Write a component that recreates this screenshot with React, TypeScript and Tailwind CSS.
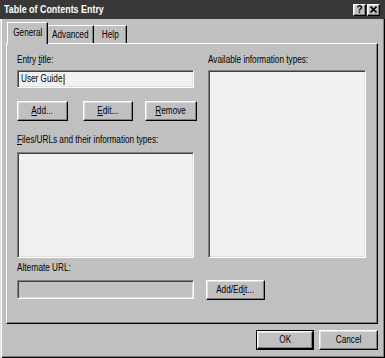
import React from "react";

const raised =
  "border border-t-white border-l-white border-r-black border-b-black shadow-[inset_-1px_-1px_0_#808080,inset_1px_1px_0_#dfdfdf]";
const sunken =
  "border border-t-[#808080] border-l-[#808080] border-r-white border-b-white shadow-[inset_1px_1px_0_#404040,inset_-1px_-1px_0_#dfdfdf]";

function T({ children, center = false }: { children: React.ReactNode; center?: boolean }) {
  return (
    <span
      className={`inline-block whitespace-nowrap scale-x-[0.82] ${center ? "origin-center" : "origin-left"}`}
    >
      {children}
    </span>
  );
}

function Btn({ children, className = "" }: { children: React.ReactNode; className?: string }) {
  return (
    <div className={`${raised} bg-[#c0c0c0] flex items-center justify-center text-black ${className}`}>
      <T center>{children}</T>
    </div>
  );
}

function U({ children }: { children: React.ReactNode }) {
  return <span className="underline underline-offset-[1px]">{children}</span>;
}

export default function App() {
  return (
    <div className="w-[385px] h-[358px] bg-[#c0c0c0] flex flex-col font-['Liberation_Sans',Arial,sans-serif] text-[10px] leading-[12px] text-black shadow-[inset_1px_1px_0_#dfdfdf,inset_2px_2px_0_#fff,inset_-1px_-1px_0_#000,inset_-2px_-2px_0_#808080] overflow-hidden">
      {/* Title bar */}
      <div className="h-[19px] bg-[#383838] flex items-center pl-[4px] pr-[5px] shrink-0">
        <span className="text-white font-bold text-[11px] leading-[13px] inline-block whitespace-nowrap scale-x-[0.81] origin-left">
          Table of Contents Entry
        </span>
        <div className="ml-auto flex gap-[1px]">
          <div className={`${raised} w-[13px] h-[12px] bg-[#c0c0c0] flex items-center justify-center font-bold text-[10px] leading-[10px]`}>?</div>
          <div className={`${raised} w-[13px] h-[12px] bg-[#c0c0c0] flex items-center justify-center`}>
            <svg width="7" height="7" viewBox="0 0 7 7">
              <path d="M0.5 0.5 L6.5 6.5 M6.5 0.5 L0.5 6.5" stroke="#000" strokeWidth="1.6" />
            </svg>
          </div>
        </div>
      </div>

      {/* Tabs */}
      <div className="flex items-end pl-[7px] mt-[3px] h-[21px] shrink-0 relative z-10">
        <div className="w-[41px] h-[22px] mb-[-1px] bg-[#c0c0c0] border-t border-l border-t-white border-l-white border-r border-r-black shadow-[inset_-1px_0_0_#808080] flex items-center justify-center pb-[2px]">
          <T center>General</T>
        </div>
        <div className="w-[46px] h-[18px] border-t border-t-white border-r border-r-black shadow-[inset_-1px_0_0_#808080] flex items-center justify-center">
          <T center>Advanced</T>
        </div>
        <div className="w-[33px] h-[18px] border-t border-t-white border-r border-r-black shadow-[inset_-1px_0_0_#808080] flex items-center justify-center">
          <T center>Help</T>
        </div>
      </div>

      {/* Panel */}
      <div className="ml-[6px] mr-[7px] h-[281px] shrink-0 border border-t-white border-l-white border-r-black border-b-black shadow-[inset_-1px_-1px_0_#808080] flex flex-col pt-[10px] pl-[10px]">
        <div className="flex h-[204px]">
          {/* Left column */}
          <div className="w-[180px] flex flex-col">
            <div>
              <T>
                Entry <U>t</U>itle:
              </T>
            </div>
            <div className={`${sunken} mt-[4px] w-[177px] h-[18px] bg-[#f1f1f1] flex items-center pl-[3px]`}>
              <T>
                User Guide
                <span className="inline-block w-[1px] h-[11px] bg-black align-middle ml-[1px]" />
              </T>
            </div>
            <div className="flex mt-[13px]">
              <Btn className="w-[51px] h-[20px]">
                <U>A</U>dd...
              </Btn>
              <Btn className="w-[50px] h-[20px] ml-[15px]">
                <U>E</U>dit...
              </Btn>
              <Btn className="w-[52px] h-[20px] ml-[12px]">
                <U>R</U>emove
              </Btn>
            </div>
            <div className="mt-[13px]">
              <T>
                <U>F</U>iles/URLs and their information types:
              </T>
            </div>
            <div className={`${sunken} mt-[6px] w-[177px] flex-1 bg-[#f1f1f1]`} />
          </div>
          {/* Right column */}
          <div className="ml-[11px] w-[158px] flex flex-col">
            <div>
              <T>Available information types:</T>
            </div>
            <div className={`${sunken} mt-[4px] flex-1 bg-[#f1f1f1]`} />
          </div>
        </div>

        <div className="mt-[4px]">
          <T>Alternate URL:</T>
        </div>
        <div className="flex items-start mt-[6px]">
          <div className={`${sunken} w-[177px] h-[19px] bg-[#c0c0c0]`} />
          <Btn className="w-[59px] h-[20px] ml-[12px]">
            Add/Ed<U>i</U>t...
          </Btn>
        </div>
      </div>

      {/* Footer */}
      <div className="flex justify-end gap-[5px] mt-[6px] pr-[7px]">
        <div className="w-[58px] h-[20px] border border-black">
          <Btn className="w-full h-full">OK</Btn>
        </div>
        <Btn className="w-[59px] h-[20px]">Cancel</Btn>
      </div>
    </div>
  );
}
